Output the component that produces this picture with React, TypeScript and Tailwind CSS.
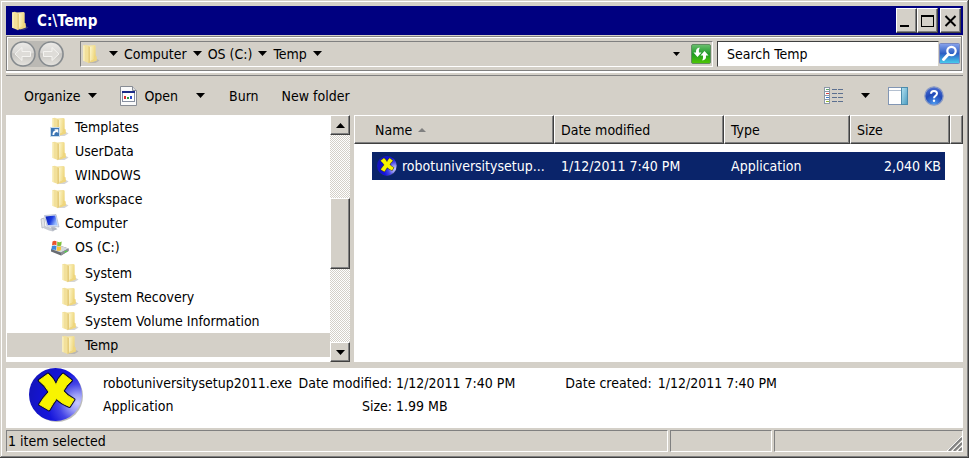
import type { ReactNode } from "react";

const raised =
  "bg-[#d4d0c8] border border-t-white border-l-white border-r-[#404040] border-b-[#404040] shadow-[inset_-1px_-1px_0_#808080]";
const sunken =
  "border border-t-[#808080] border-l-[#808080] border-r-white border-b-white";

const tree = [
  { name: "Templates", indent: "pl-[43px]", icon: "shortcut" },
  { name: "UserData", indent: "pl-[43px]", icon: "folder" },
  { name: "WINDOWS", indent: "pl-[43px]", icon: "folder" },
  { name: "workspace", indent: "pl-[43px]", icon: "folder" },
  { name: "Computer", indent: "pl-[33px]", icon: "computer" },
  { name: "OS (C:)", indent: "pl-[43px] mb-0.5", icon: "drive" },
  { name: "System", indent: "pl-[53px]", icon: "folder" },
  { name: "System Recovery", indent: "pl-[53px]", icon: "folder" },
  { name: "System Volume Information", indent: "pl-[53px]", icon: "folder" },
  { name: "Temp", indent: "pl-[53px]", icon: "folder", selected: true },
];

// Gradients shared by all the icons
const Gradients = () => (
  <svg className="absolute w-0 h-0" aria-hidden="true">
    <defs>
      <linearGradient id="folder-back" x1="0" y1="0" x2="0.6" y2="1">
        <stop offset="0" stopColor="#f7eaae" />
        <stop offset="1" stopColor="#ead078" />
      </linearGradient>
      <linearGradient id="folder-front" x1="0" y1="0" x2="1" y2="0.3">
        <stop offset="0" stopColor="#fdf6cc" />
        <stop offset="1" stopColor="#efd982" />
      </linearGradient>
      <radialGradient id="ball" cx="0.92" cy="0.66" r="0.9">
        <stop offset="0" stopColor="#c8caff" />
        <stop offset="0.18" stopColor="#9a9cf6" />
        <stop offset="0.4" stopColor="#4444e6" />
        <stop offset="0.65" stopColor="#1414dc" />
        <stop offset="1" stopColor="#1414c0" />
      </radialGradient>
      <linearGradient id="nav" x1="0" y1="0" x2="0" y2="1">
        <stop offset="0" stopColor="#e4e2de" />
        <stop offset="0.5" stopColor="#c6c4c0" />
        <stop offset="1" stopColor="#e6e4df" />
      </linearGradient>
      <linearGradient id="green" x1="0" y1="0" x2="0" y2="1">
        <stop offset="0" stopColor="#6cc070" />
        <stop offset="0.5" stopColor="#1f9a27" />
        <stop offset="1" stopColor="#4fc900" />
      </linearGradient>
      <linearGradient id="search" x1="0" y1="0" x2="0" y2="1">
        <stop offset="0" stopColor="#8aa4ec" />
        <stop offset="0.5" stopColor="#2c5fc4" />
        <stop offset="1" stopColor="#48d0ee" />
      </linearGradient>
      <radialGradient id="help" cx="0.5" cy="0.95" r="0.9">
        <stop offset="0" stopColor="#4f9cf0" />
        <stop offset="0.6" stopColor="#2149b8" />
        <stop offset="1" stopColor="#4a6cd0" />
      </radialGradient>
      <linearGradient id="screen" x1="0" y1="0" x2="1" y2="0.4">
        <stop offset="0" stopColor="#0a1cae" />
        <stop offset="0.55" stopColor="#1c3ce0" />
        <stop offset="1" stopColor="#9cc0ff" />
      </linearGradient>
      <linearGradient id="pane" x1="0" y1="0" x2="1" y2="1">
        <stop offset="0" stopColor="#b4e2f2" />
        <stop offset="1" stopColor="#4a9cc0" />
      </linearGradient>
    </defs>
  </svg>
);

const FolderIcon = ({ shortcut = false }: { shortcut?: boolean }) => (
  <svg viewBox="0 0 20 20" className="w-5 h-5 shrink-0" aria-hidden="true">
    <path d="M14 14l4.500 2.500-4 2.500H8z" fill="#888" opacity="0.35" />
    <path d="M6 1.500L13.500 1l1.200.8V16L8 18.500z" fill="url(#folder-back)" />
    <path d="M9 2.800l5-1V14.500L9 18z" fill="url(#folder-front)" />
    <path d="M13 11.500l2.600.7.400 4.300-3.500 1.200-3 .8v-1.700l3.500-1.500z" fill="#efd67e" />
    <path d="M2.200 1.200L5 .8l3.200 1.800v16.600l-6-2.400z" fill="#f2e09a" />
    <path d="M2.200 1.200l1.300.7v15.400l-1.300-.5z" fill="#fbf2c4" />
    <path d="M7.500 2.300l1.300.6v15.600l-1.300.7z" fill="#e2c876" />
    {shortcut && (
      <g>
        <rect x="0.500" y="10.500" width="9" height="9" fill="#3c76b4" stroke="#c8dcec" />
        <path d="M2.500 18c0-3 1-4.200 3-4.400L4.300 12.300h4v4L7 15c-2 .2-2.700 1.200-2.700 3z" fill="#fff" />
      </g>
    )}
  </svg>
);

const ComputerIcon = () => (
  <svg viewBox="0 0 20 20" className="w-5 h-5 shrink-0" aria-hidden="true">
    <path d="M1 6l3-1 1 9-3 1z" fill="#e2e4e8" stroke="#a0a4ac" strokeWidth="0.6" />
    <path d="M2 14.500l3-1.500 11 3-3 2.500-4-1z" fill="#c6cad2" />
    <path d="M4.500 2.500L16 1.500 19 14 7 13z" fill="#dfe6f4" stroke="#8f9bb4" strokeWidth="0.5" />
    <path d="M5.500 3.400l9.800-.8 2.300 10-9.700-.6z" fill="url(#screen)" />
    <path d="M11 14l4 .3 2.500 2-5 1.500z" fill="#aeb4c0" />
  </svg>
);

const DriveIcon = () => (
  <svg viewBox="0 0 20 20" className="w-5 h-5 shrink-0" aria-hidden="true">
    <path d="M1 12l7-4 10.500 3.500v2.500L11 18.500 1 14.500z" fill="#686c72" />
    <path d="M1 12l7-4 10.500 3.500-7.500 4z" fill="#d5d9dd" />
    <path d="M11 15.500l7.500-4v2.500L11 18.500z" fill="#8c9096" />
    <path d="M14.500 15.300l2.500-1.300" stroke="#48e038" strokeWidth="1.200" />
    <path d="M2.500 4.500q2-1.500 4-.3v4q-2-1.200-4.500.3z" fill="#e8542c" />
    <path d="M7.200 4.600q2 1.200 4.500 0l-.5 4q-2.200 1-4 .1z" fill="#7ec23c" />
    <path d="M1.800 9.200q2.300-1.400 4.500-.2l-.3 4q-2-1.200-4.400.2z" fill="#3c86dc" />
    <path d="M7 9.300q2 1.200 4.200 0l-.4 4q-2 1-4 .2z" fill="#f6c43a" />
  </svg>
);

const AppIcon = ({ className }: { className: string }) => (
  <svg viewBox="0 0 54 54" className={className} aria-hidden="true">
    <circle cx="28" cy="28" r="26" fill="#555" opacity="0.4" />
    <circle cx="26.500" cy="26.500" r="26.500" fill="url(#ball)" />
    <path
      d="M10 12.500L19 6 Q24 10 27 17 Q29.500 10 34 6 L42.500 12.500 Q37 17 34 23 Q38 28 45 31.500 L40.500 38.500 Q33 36 27.500 30.500 Q24 35 20 42 L10.500 36.500 Q14 30 20 24 Q16 17 10 12.500z"
      fill="#f8f400"
      stroke="#101038"
      strokeWidth="3"
      strokeLinejoin="round"
    />
    <path
      d="M10 12.500L19 6 Q24 10 27 17 Q29.500 10 34 6 L42.500 12.500 Q37 17 34 23 Q38 28 45 31.500 L40.500 38.500 Q33 36 27.500 30.500 Q24 35 20 42 L10.500 36.500 Q14 30 20 24 Q16 17 10 12.500z"
      fill="#f8f400"
      stroke="#f8f400"
      strokeWidth="1"
      strokeLinejoin="round"
    />
  </svg>
);

const Caret = () => (
  <svg viewBox="0 0 9 5" className="w-[9px] h-[5px] shrink-0" aria-hidden="true">
    <path d="M0 0h9L4.500 5z" />
  </svg>
);

const NavButton = ({ label, children }: { label: string; children: ReactNode }) => (
  <button type="button" aria-label={label} className="w-[26px] h-[26px]">
    <svg viewBox="0 0 26 26" className="w-full h-full">
      <circle cx="13" cy="13" r="12" fill="url(#nav)" stroke="#858a8e" strokeWidth="1.500" />
      <path d="M2.500 12a10.500 10.500 0 0 1 21 0Q13 15 2.500 12z" fill="#fff" opacity="0.3" />
      {children}
    </svg>
  </button>
);

const TreeIcon = ({ icon }: { icon: string }) => {
  if (icon === "computer") return <ComputerIcon />;
  if (icon === "drive") return <DriveIcon />;
  return <FolderIcon shortcut={icon === "shortcut"} />;
};

const TitleBar = () => (
  <header className="flex items-center h-[29px] bg-[#000080] text-white pl-1 pr-0.5">
    <FolderIcon />
    <h1 className="ml-[7px] flex-1 text-[15px] font-bold">C:\Temp</h1>
    <button type="button" aria-label="Minimize" className={`w-[21px] h-[25px] ${raised}`}>
      <svg viewBox="0 0 19 23" className="w-full h-full">
        <path d="M3 16h9v2H3z" />
      </svg>
    </button>
    <button type="button" aria-label="Maximize" className={`w-[21px] h-[25px] ${raised}`}>
      <svg viewBox="0 0 19 23" className="w-full h-full">
        <path d="M3 6h13v12H3zM4 8v9h11V8z" fillRule="evenodd" />
      </svg>
    </button>
    <button type="button" aria-label="Close" className={`ml-0.5 w-[21px] h-[25px] ${raised}`}>
      <svg viewBox="0 0 19 23" className="w-full h-full">
        <path d="M4.500 7l10 10M14.500 7l-10 10" stroke="#000" strokeWidth="2" />
      </svg>
    </button>
  </header>
);

const AddressBar = () => (
  <div className="mt-px border-b border-[#808080]">
    <div className="flex items-center h-[35px] pl-[3px] pr-px mr-px border border-[#808080] shadow-[inset_1px_1px_0_#fff,1px_0_0_#fff]">
      <div className="flex gap-0.5 rounded-full bg-[#bbb9b4]">
        <NavButton label="Back">
          <path d="M5 13l7-6.500v4h8.500v5H12v4z" fill="#dedcd8" stroke="#f4f3f0" />
        </NavButton>
        <NavButton label="Forward">
          <path d="M21 13l-7-6.500v4H5.500v5H14v4z" fill="#dedcd8" stroke="#f4f3f0" />
        </NavButton>
      </div>
      <nav aria-label="Address" className={`ml-4 flex flex-1 items-center h-[26px] pr-px ${sunken}`}>
        <FolderIcon />
        <button type="button" aria-label="Locations" className="ml-2 mr-1.5">
          <Caret />
        </button>
        {["Computer", "OS (C:)", "Temp"].map((part) => (
          <button key={part} type="button" className="flex items-center gap-1.5 mr-1.5">
            {part}
            <Caret />
          </button>
        ))}
        <button type="button" aria-label="Previous locations" className="ml-auto mr-[11px]">
          <svg viewBox="0 0 7 4" className="w-[7px] h-1">
            <path d="M0 0h7L3.500 4z" />
          </svg>
        </button>
        <button type="button" aria-label="Refresh" className="w-5 h-5">
          <svg viewBox="0 0 20 20" className="w-full h-full">
            <rect x="0.500" y="0.500" width="19" height="19" rx="1.500" fill="url(#green)" stroke="#608c60" />
            <path d="M8.800 3.500Q4.500 4 5 8.500H2.500L6.500 13l4-4.500H8Q7.500 5.500 8.800 3.500z" fill="#fff" />
            <path d="M11.200 16.500q4.300-.5 3.800-5h2.500L13.500 7l-4 4.500H12q.5 3-.8 5z" fill="#fff" />
          </svg>
        </button>
      </nav>
      <input
        type="text"
        aria-label="Search Temp"
        defaultValue="Search Temp"
        className="ml-1 w-[222px] h-[26px] px-[9px] bg-white border border-t-[#404040] border-l-[#404040] border-r-[#d4d0c8] border-b-[#d4d0c8] outline-none"
      />
      <button type="button" aria-label="Search" className="w-[21px] h-[21px]">
        <svg viewBox="0 0 21 21" className="w-full h-full">
          <rect x="0.500" y="0.500" width="20" height="20" rx="1" fill="url(#search)" stroke="#7888c0" />
          <circle cx="12.500" cy="8" r="4.200" fill="none" stroke="#fff" strokeWidth="2.200" />
          <path d="M9.300 11.300L4.500 16.500" stroke="#fff" strokeWidth="3" strokeLinecap="round" />
        </svg>
      </button>
    </div>
    <div className="h-0.5 bg-white" />
    <div className="h-0.5" />
  </div>
);

const Toolbar = () => (
  <div className="flex items-center h-[39px] pl-[18px] pr-[19px]">
    <button type="button" className="flex items-center gap-2">
      Organize
      <Caret />
    </button>
    <button type="button" className="ml-[23px] flex items-center gap-[7px]">
      <svg viewBox="0 0 17 20" className="w-[17px] h-5" aria-hidden="true">
        <path d="M.5.500h12l4 4v15H.5z" fill="#fafafa" stroke="#888c94" />
        <path d="M12.500.500v4h4" fill="#ddd" stroke="#888c94" />
        <rect x="2.500" y="5.500" width="12" height="10" fill="#fff" stroke="#8890a0" />
        <path d="M2 5h13v2H2z" fill="#1c2c88" />
        <path d="M4 10h2v3H4z" fill="#d83030" />
        <path d="M7 11h2v2H7z" fill="#2c9c3c" />
        <path d="M10 10h2v3h-2z" fill="#2c48c8" />
      </svg>
      Open
    </button>
    <button type="button" aria-label="Open with" className="ml-[18px]">
      <Caret />
    </button>
    <button type="button" className="ml-6">Burn</button>
    <button type="button" className="ml-[23px]">New folder</button>
    <button type="button" aria-label="Change view" className="ml-auto">
      <svg viewBox="0 0 20 18" className="w-5 h-[18px]">
        {["#5fa86c", "#d84040", "#3c78d0", "#98b830"].map((color, i) => (
          <g key={color} transform={`translate(0 ${i * 4})`}>
            <rect x="0.500" y="0.500" width="5" height="4" fill="#fff" stroke="#8c98a8" />
            <path d="M2 2h3v1H2z" fill={color} />
            <path d="M8 2.500h5M14 2.500h5" stroke="#5c7090" />
          </g>
        ))}
      </svg>
    </button>
    <button type="button" aria-label="More view options" className="ml-[17px]">
      <Caret />
    </button>
    <button type="button" aria-label="Show preview pane" className="ml-[18px]">
      <svg viewBox="0 0 20 18" className="w-5 h-[18px]">
        <rect x="0.500" y="0.500" width="19" height="17" fill="#fff" stroke="#8296b4" />
        <path d="M1 3.500h12" stroke="#b4c0d0" />
        <rect x="13.500" y="0.500" width="6" height="17" fill="url(#pane)" stroke="#4c8cac" />
      </svg>
    </button>
    <button type="button" aria-label="Help" className="ml-4">
      <svg viewBox="0 0 20 20" className="w-5 h-5">
        <circle cx="10" cy="10" r="9.200" fill="url(#help)" stroke="#8c9cc4" strokeWidth="1.200" />
        <path d="M7 7.800Q7 5 10 5t3 2.600q0 1.300-1.500 2.200T10 12.200" fill="none" stroke="#fff" strokeWidth="2" />
        <circle cx="10" cy="14.800" r="1.200" fill="#fff" />
      </svg>
    </button>
  </div>
);

const ScrollBar = () => (
  <div className="flex flex-col w-5 shrink-0 bg-[repeating-conic-gradient(#d4d0c8_0_25%,#fff_0_50%)] bg-[length:2px_2px]">
    <button type="button" aria-label="Scroll up" className={`flex items-center justify-center h-5 ${raised}`}>
      <svg viewBox="0 0 9 5" className="w-[9px] h-[5px]">
        <path d="M0 5h9L4.500 0z" />
      </svg>
    </button>
    <div className="grow-[63]" />
    <div className={`h-[71px] ${raised}`} />
    <div className="grow-[73]" />
    <button type="button" aria-label="Scroll down" className={`flex items-center justify-center h-5 ${raised}`}>
      <Caret />
    </button>
  </div>
);

const FolderTree = () => (
  <nav aria-label="Folders" className="flex w-[344px] shrink-0 bg-white">
    <ul className="flex-1 pl-px pb-[5px]">
      {tree.map((item) => (
        <li key={item.name}>
          <button
            type="button"
            className={`flex items-center gap-[5px] w-full h-6 text-left ${item.indent} ${item.selected ? "bg-[#d4d0c8]" : ""}`}
          >
            <TreeIcon icon={item.icon} />
            {item.name}
          </button>
        </li>
      ))}
    </ul>
    <ScrollBar />
  </nav>
);

const FileList = () => (
  <section aria-label="Files" className="flex-1 min-w-0 overflow-hidden bg-white">
    <table className="w-full table-fixed border-separate border-spacing-0">
      <colgroup>
        <col className="w-[18px]" />
        <col className="w-[182px]" />
        <col className="w-[170px]" />
        <col className="w-[126px]" />
        <col className="w-[95px]" />
        <col className="w-[5px]" />
        <col />
      </colgroup>
      <thead>
        <tr className="h-[29px] text-left">
          <th colSpan={2} className={`pl-5 font-normal ${raised}`}>
            <span className="flex items-center gap-1.5">
              Name
              <svg viewBox="0 0 8 4" className="w-2 h-1" aria-hidden="true">
                <path d="M0 4h8L4 0z" fill="#808080" />
              </svg>
            </span>
          </th>
          <th className={`pl-1.5 font-normal ${raised}`}>Date modified</th>
          <th className={`pl-1.5 font-normal ${raised}`}>Type</th>
          <th colSpan={2} className={`pl-1.5 font-normal ${raised}`}>Size</th>
          <td className={raised} />
        </tr>
      </thead>
      <tbody>
        <tr className="h-2" />
        <tr className="h-7 text-white">
          <td />
          <td className="pl-[5px] bg-[#0a246a]">
            <span className="flex items-center gap-[5px]">
              <AppIcon className="w-5 h-5" />
              robotuniversitysetup...
            </span>
          </td>
          <td className="pl-[7px] bg-[#0a246a]">1/12/2011 7:40 PM</td>
          <td className="pl-[7px] bg-[#0a246a]">Application</td>
          <td className="pr-1 text-right bg-[#0a246a]">2,040 KB</td>
        </tr>
      </tbody>
    </table>
  </section>
);

const Details = () => (
  <section aria-label="Details" className="flex mt-1.5 h-[60px] pl-[23px] bg-white leading-[23px]">
    <AppIcon className="w-[54px] h-[54px] shrink-0" />
    <div className="ml-5 pt-1 w-[193px]">
      <p>robotuniversitysetup2011.exe</p>
      <p>Application</p>
    </div>
    <dl className="pt-1 grid grid-cols-[96px_auto] content-start gap-x-1">
      <dt className="text-right">Date modified:</dt>
      <dd>1/12/2011 7:40 PM</dd>
      <dt className="text-right">Size:</dt>
      <dd>1.99 MB</dd>
    </dl>
    <dl className="ml-[50px] pt-1 flex gap-1.5">
      <dt>Date created:</dt>
      <dd>1/12/2011 7:40 PM</dd>
    </dl>
  </section>
);

const StatusBar = () => (
  <footer className="flex gap-0.5 mt-0.5 h-[22px]">
    <div className={`flex-1 pl-px leading-5 ${sunken}`}>1 item selected</div>
    <div className={`w-[102px] ${sunken}`} />
    <div className={`flex items-end justify-end w-[189px] ${sunken}`}>
      <svg viewBox="0 0 16 15" className="w-4 h-[15px]" aria-hidden="true">
        <path d="M1 15L16 0M6 15L16 5M11 15l5-5" stroke="#fff" />
        <path d="M3 15L16 2M8 15l8-8M13 15l3-3" stroke="#808080" strokeWidth="2" />
      </svg>
    </div>
  </footer>
);

const App = () => (
  <div className="min-h-screen flex flex-col bg-[#d4d0c8] border-r border-b border-[#404040] text-black text-[14px] leading-5 whitespace-nowrap font-['DejaVu_Sans_Condensed','Noto_Sans',sans-serif]">
    <Gradients />
    <div className="flex flex-col flex-1 pt-[5px] pl-[5px] pr-1 pb-1 ml-px mt-px border-r border-b border-[#808080] shadow-[inset_1px_1px_0_#fff]">
      <TitleBar />
      <AddressBar />
      <Toolbar />
      <main className="flex flex-1 gap-1">
        <FolderTree />
        <FileList />
      </main>
      <Details />
      <StatusBar />
    </div>
  </div>
);

export default App;
